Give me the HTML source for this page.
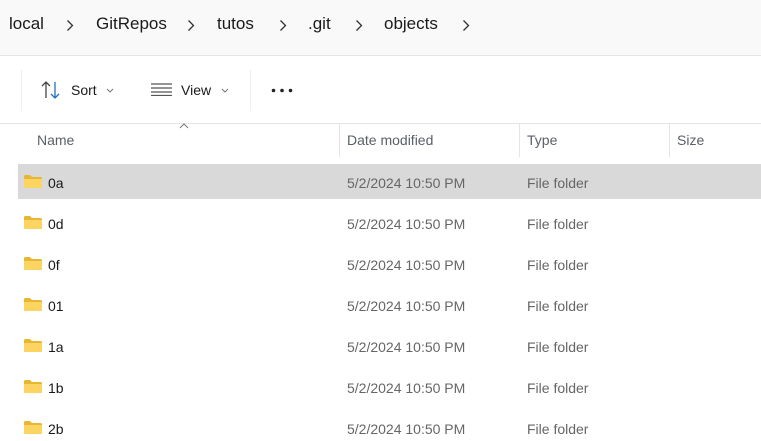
<!DOCTYPE html>
<html><head><style>
body{margin:0;width:761px;height:441px;overflow:hidden;background:#fff;font-family:"Liberation Sans",sans-serif;position:relative}
.a{position:absolute;white-space:nowrap}
.bc{font-size:17px;color:#1a1a1a;top:14px}
.chev{top:19px}
.t{font-size:14px;color:#1a1a1a}
.h{font-size:14px;color:#5a6068;top:132px}
.g{font-size:14px;color:#666}
.fold{position:absolute;left:24px;width:18px;height:13px}
</style></head><body>
<div class="a" style="left:0;top:0;width:761px;height:55px;background:#f9f9f9;border-bottom:1px solid #e5e5e5"></div>
<div class="a bc" style="left:9px">local</div>
<svg class="a chev" style="left:66px" width="8" height="13"><path d="M1.5 1.5l5 5-5 5" stroke="#333" stroke-width="1.3" fill="none"/></svg>
<div class="a bc" style="left:96px">GitRepos</div>
<svg class="a chev" style="left:187px" width="8" height="13"><path d="M1.5 1.5l5 5-5 5" stroke="#333" stroke-width="1.3" fill="none"/></svg>
<div class="a bc" style="left:217px">tutos</div>
<svg class="a chev" style="left:279px" width="8" height="13"><path d="M1.5 1.5l5 5-5 5" stroke="#333" stroke-width="1.3" fill="none"/></svg>
<div class="a bc" style="left:308px">.git</div>
<svg class="a chev" style="left:355px" width="8" height="13"><path d="M1.5 1.5l5 5-5 5" stroke="#333" stroke-width="1.3" fill="none"/></svg>
<div class="a bc" style="left:384px">objects</div>
<svg class="a chev" style="left:462px" width="8" height="13"><path d="M1.5 1.5l5 5-5 5" stroke="#333" stroke-width="1.3" fill="none"/></svg>
<div class="a" style="left:21px;top:70px;width:1px;height:41px;background:#eee"></div>
<div class="a" style="left:250px;top:70px;width:1px;height:41px;background:#eee"></div>
<svg class="a" style="left:40px;top:80px" width="22" height="20" viewBox="0 0 22 20"><path d="M6 18V2M2 6l4-4 4 4" stroke="#444" stroke-width="1.3" fill="none"/><path d="M15 2v16M11 14l4 4 4-4" stroke="#1a73c8" stroke-width="1.3" fill="none"/></svg>
<div class="a t" style="left:71px;top:82px">Sort</div>
<svg class="a" style="left:106px;top:88px" width="8" height="5"><path d="M1 1l3 3 3-3" stroke="#777" fill="none"/></svg>
<svg class="a" style="left:151px;top:83px" width="21" height="13"><path d="M0 1h21M0 5h21M0 9h21M0 12.5h21" stroke="#555" stroke-width="1.2"/></svg>
<div class="a t" style="left:181px;top:82px">View</div>
<svg class="a" style="left:221px;top:88px" width="8" height="5"><path d="M1 1l3 3 3-3" stroke="#777" fill="none"/></svg>
<svg class="a" style="left:271px;top:88px" width="22" height="5"><circle cx="2.5" cy="2.5" r="1.8" fill="#222"/><circle cx="11" cy="2.5" r="1.8" fill="#222"/><circle cx="19.5" cy="2.5" r="1.8" fill="#222"/></svg>
<div class="a" style="left:0;top:123px;width:761px;height:1px;background:#e5e5e5"></div>
<svg class="a" style="left:179px;top:123px" width="10" height="6"><path d="M1 5l4-4 4 4" stroke="#777" fill="none"/></svg>
<div class="a h" style="left:37px">Name</div>
<div class="a" style="left:339px;top:124px;width:1px;height:33px;background:#e5e5e5"></div>
<div class="a h" style="left:347px">Date modified</div>
<div class="a" style="left:519px;top:124px;width:1px;height:33px;background:#e5e5e5"></div>
<div class="a h" style="left:527px">Type</div>
<div class="a" style="left:669px;top:124px;width:1px;height:33px;background:#e5e5e5"></div>
<div class="a h" style="left:677px">Size</div>
<div class="a" style="top:164px;left:18px;width:743px;height:35px;background:#d9d9d9"></div>
<svg class="fold a" style="top:175px" viewBox="0 0 18 13"><path d="M0 1.5Q0 0 1.5 0H6l2 2h8.5Q18 2 18 3.5V12Q18 13 16.5 13H1.5Q0 13 0 11.5Z" fill="#e8b632"/><path d="M0 4H18V11.5Q18 13 16.5 13H1.5Q0 13 0 11.5Z" fill="#fcd462"/></svg>
<div class="a t" style="left:48px;top:175px">0a</div><div class="a g" style="left:347px;top:175px">5/2/2024 10:50 PM</div><div class="a g" style="left:527px;top:175px">File folder</div>
<svg class="fold a" style="top:216px" viewBox="0 0 18 13"><path d="M0 1.5Q0 0 1.5 0H6l2 2h8.5Q18 2 18 3.5V12Q18 13 16.5 13H1.5Q0 13 0 11.5Z" fill="#e8b632"/><path d="M0 4H18V11.5Q18 13 16.5 13H1.5Q0 13 0 11.5Z" fill="#fcd462"/></svg>
<div class="a t" style="left:48px;top:216px">0d</div><div class="a g" style="left:347px;top:216px">5/2/2024 10:50 PM</div><div class="a g" style="left:527px;top:216px">File folder</div>
<svg class="fold a" style="top:257px" viewBox="0 0 18 13"><path d="M0 1.5Q0 0 1.5 0H6l2 2h8.5Q18 2 18 3.5V12Q18 13 16.5 13H1.5Q0 13 0 11.5Z" fill="#e8b632"/><path d="M0 4H18V11.5Q18 13 16.5 13H1.5Q0 13 0 11.5Z" fill="#fcd462"/></svg>
<div class="a t" style="left:48px;top:257px">0f</div><div class="a g" style="left:347px;top:257px">5/2/2024 10:50 PM</div><div class="a g" style="left:527px;top:257px">File folder</div>
<svg class="fold a" style="top:298px" viewBox="0 0 18 13"><path d="M0 1.5Q0 0 1.5 0H6l2 2h8.5Q18 2 18 3.5V12Q18 13 16.5 13H1.5Q0 13 0 11.5Z" fill="#e8b632"/><path d="M0 4H18V11.5Q18 13 16.5 13H1.5Q0 13 0 11.5Z" fill="#fcd462"/></svg>
<div class="a t" style="left:48px;top:298px">01</div><div class="a g" style="left:347px;top:298px">5/2/2024 10:50 PM</div><div class="a g" style="left:527px;top:298px">File folder</div>
<svg class="fold a" style="top:339px" viewBox="0 0 18 13"><path d="M0 1.5Q0 0 1.5 0H6l2 2h8.5Q18 2 18 3.5V12Q18 13 16.5 13H1.5Q0 13 0 11.5Z" fill="#e8b632"/><path d="M0 4H18V11.5Q18 13 16.5 13H1.5Q0 13 0 11.5Z" fill="#fcd462"/></svg>
<div class="a t" style="left:48px;top:339px">1a</div><div class="a g" style="left:347px;top:339px">5/2/2024 10:50 PM</div><div class="a g" style="left:527px;top:339px">File folder</div>
<svg class="fold a" style="top:380px" viewBox="0 0 18 13"><path d="M0 1.5Q0 0 1.5 0H6l2 2h8.5Q18 2 18 3.5V12Q18 13 16.5 13H1.5Q0 13 0 11.5Z" fill="#e8b632"/><path d="M0 4H18V11.5Q18 13 16.5 13H1.5Q0 13 0 11.5Z" fill="#fcd462"/></svg>
<div class="a t" style="left:48px;top:380px">1b</div><div class="a g" style="left:347px;top:380px">5/2/2024 10:50 PM</div><div class="a g" style="left:527px;top:380px">File folder</div>
<svg class="fold a" style="top:421px" viewBox="0 0 18 13"><path d="M0 1.5Q0 0 1.5 0H6l2 2h8.5Q18 2 18 3.5V12Q18 13 16.5 13H1.5Q0 13 0 11.5Z" fill="#e8b632"/><path d="M0 4H18V11.5Q18 13 16.5 13H1.5Q0 13 0 11.5Z" fill="#fcd462"/></svg>
<div class="a t" style="left:48px;top:421px">2b</div><div class="a g" style="left:347px;top:421px">5/2/2024 10:50 PM</div><div class="a g" style="left:527px;top:421px">File folder</div>
</body></html>
